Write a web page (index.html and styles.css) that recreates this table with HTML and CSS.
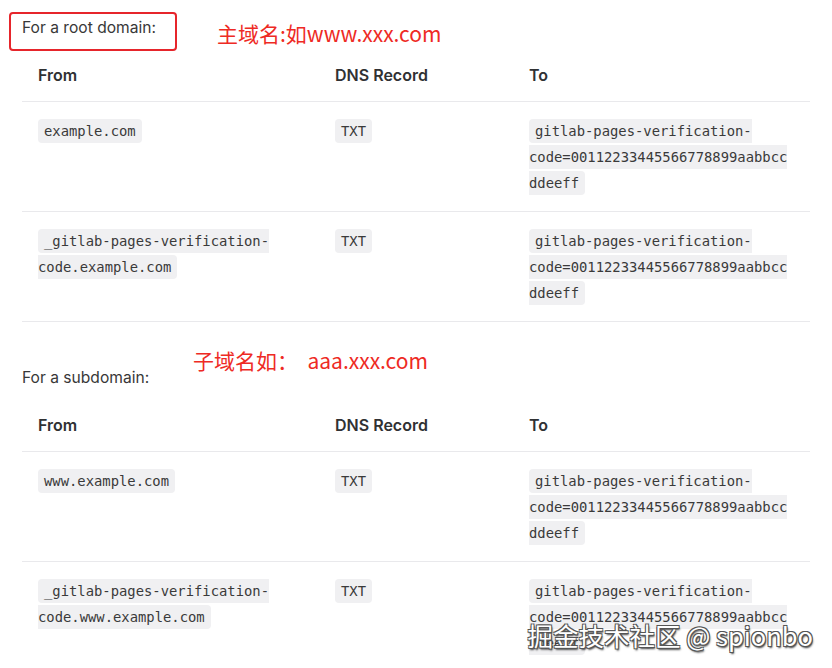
FILE: index.html
```
<!DOCTYPE html>
<html lang="en">
<head>
<meta charset="utf-8">
<title>GitLab Pages verification</title>
<link rel="stylesheet" href="styles.css">
</head>
<body>
<main class="doc">
  <p class="lead lead-first">
    <span class="lead-text">For a root domain:</span>
    <span class="mark-box"></span>
    <span class="note note-root">主域名:如www.xxx.com</span>
  </p>
  <table class="dns">
    <colgroup><col class="c1"><col class="c2"><col class="c3"></colgroup>
    <thead>
      <tr><th>From</th><th>DNS Record</th><th>To</th></tr>
    </thead>
    <tbody>
      <tr>
        <td><code>example.com</code></td>
        <td><code>TXT</code></td>
        <td><code>gitlab-pages-verification-code=00112233445566778899aabbccddeeff</code></td>
      </tr>
      <tr>
        <td><code>_gitlab-pages-verification-code.example.com</code></td>
        <td><code>TXT</code></td>
        <td><code>gitlab-pages-verification-code=00112233445566778899aabbccddeeff</code></td>
      </tr>
    </tbody>
  </table>

  <p class="lead lead-sub">
    <span class="lead-text">For a subdomain:</span>
    <span class="note note-sub">子域名如：&nbsp; aaa.xxx.com</span>
  </p>
  <table class="dns">
    <colgroup><col class="c1"><col class="c2"><col class="c3"></colgroup>
    <thead>
      <tr><th>From</th><th>DNS Record</th><th>To</th></tr>
    </thead>
    <tbody>
      <tr>
        <td><code>www.example.com</code></td>
        <td><code>TXT</code></td>
        <td><code>gitlab-pages-verification-code=00112233445566778899aabbccddeeff</code></td>
      </tr>
      <tr>
        <td><code>_gitlab-pages-verification-code.www.example.com</code></td>
        <td><code>TXT</code></td>
        <td><code>gitlab-pages-verification-code=00112233445566778899aabbccddeeff</code></td>
      </tr>
    </tbody>
  </table>
</main>
<div class="watermark">掘金技术社区 @ spionbo</div>
</body>
</html>
```

FILE: styles.css
```
html, body {
  margin: 0;
  padding: 0;
  background: #ffffff;
}
body {
  width: 832px;
  height: 668px;
  overflow: hidden;
  position: relative;
  font-family: Inter, "Noto Sans", "Liberation Sans", sans-serif;
  color: #333333;
}
.doc {
  padding: 0 22px;
  width: 788px;
}
.lead {
  position: relative;
  margin: 0;
  font-size: 15.6px;
  line-height: 24px;
  color: #383838;
}
.lead-first {
  margin-top: 16px;
}
.lead-sub {
  margin-top: 44px;
}
.mark-box {
  position: absolute;
  left: -13px;
  top: -4px;
  width: 164px;
  height: 35px;
  border: 2px solid #e6252b;
  border-radius: 4px;
}
.note {
  position: absolute;
  font-family: "Noto Sans CJK SC", "Noto Sans", sans-serif;
  font-size: 21px;
  line-height: 28px;
  color: #ee2a24;
  white-space: nowrap;
}
.note-root {
  left: 195px;
  top: 3px;
}
.note-sub {
  left: 171px;
  top: -20px;
}
.dns {
  width: 788px;
  margin-top: 9px;
  border-collapse: collapse;
  table-layout: fixed;
}
.c1 { width: 297px; }
.c2 { width: 194px; }
.c3 { width: 297px; }
.dns th {
  text-align: left;
  font-size: 16px;
  font-weight: 600;
  line-height: 26px;
  color: #303133;
  padding: 13px 16px 13px;
  border-bottom: 1px solid #e9e9ec;
}
.dns td {
  vertical-align: top;
  padding: 16px 16px 15px;
  line-height: 26px;
  font-size: 14px;
  border-bottom: 1px solid #e9e9ec;
  overflow-wrap: anywhere;
}
.dns code {
  font-family: "DejaVu Sans Mono", "Liberation Mono", monospace;
  font-size: 13.85px;
  color: #3a3a3a;
  background: #f0f0f2;
  border-radius: 4px;
  padding: 4px 6px;
}
.watermark {
  position: absolute;
  right: 19px;
  bottom: 18px;
  font-family: "Noto Sans CJK SC", "Noto Sans", sans-serif;
  font-size: 25.5px;
  line-height: 30px;
  color: #ffffff;
  text-shadow:
    -1px -1px 0 #555, 1px -1px 0 #555, -1px 1px 0 #555, 1px 1px 0 #555,
    1px 2px 2px #333;
  white-space: nowrap;
}
```
